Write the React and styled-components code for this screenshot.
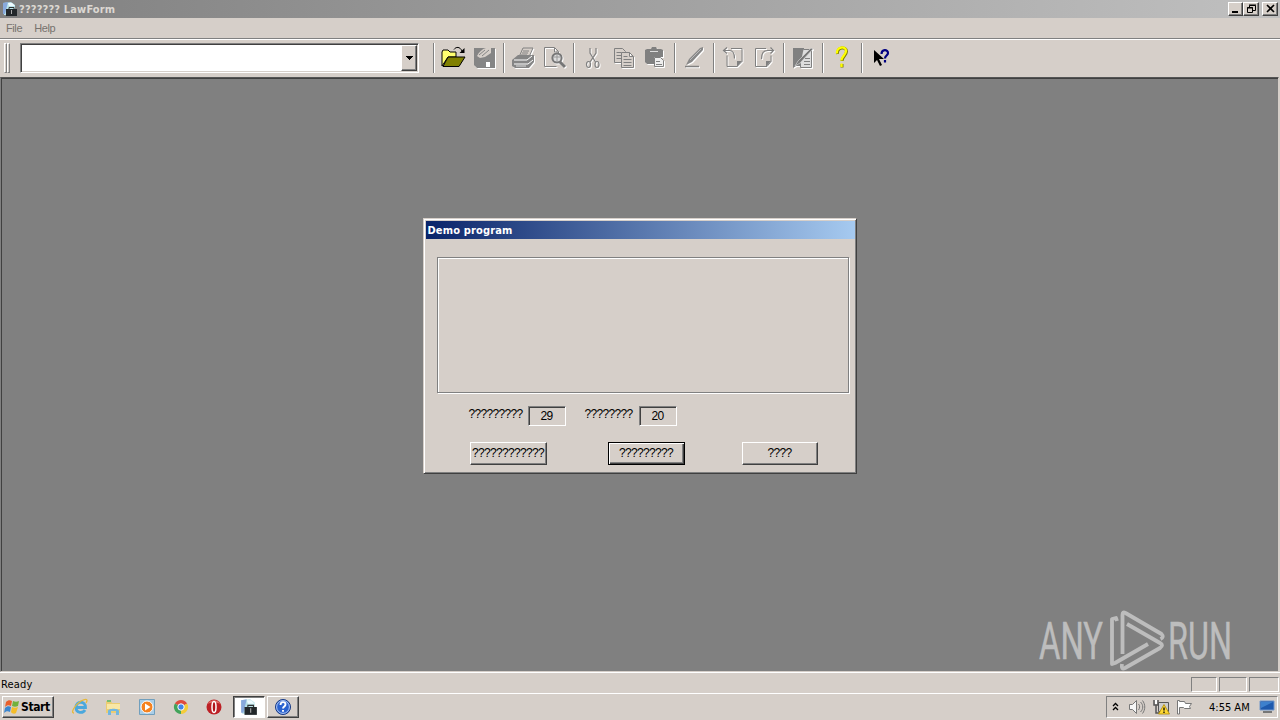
import React from "react";
import styled, { createGlobalStyle } from "styled-components";

const face = "#d6cfc9";

function App() {
  return (
    <Screen>
      <GlobalStyle />
      <TitleBar>
        <AppIcon size={16} />
        <Title>??????? LawForm</Title>
        <WindowButtons>
          <WindowButton $wide={15}>
            <svg width="11" height="10" viewBox="0 0 11 10">
              <path d="M2 8h6" stroke="#000" strokeWidth="2" />
            </svg>
          </WindowButton>
          <WindowButton $wide={16}>
            <svg width="11" height="10" viewBox="0 0 11 10" fill="none" stroke="#000">
              <path d="M3.500 3V1.500h6v5H7M3 1h7M1.500 3.500h5v5h-5zM1 4h6" />
            </svg>
          </WindowButton>
          <WindowButton $wide={16} $gap>
            <svg width="11" height="10" viewBox="0 0 11 10">
              <path d="M2 1l7 7M9 1L2 8" stroke="#000" strokeWidth="1.600" />
            </svg>
          </WindowButton>
        </WindowButtons>
      </TitleBar>
      <MenuBar>
        <MenuItem>File</MenuItem>
        <MenuItem>Help</MenuItem>
      </MenuBar>
      <Toolbar />
      <Workspace>
        <DemoDialog />
      </Workspace>
      <StatusBar>
        <Ready>Ready</Ready>
        <Pane $wide={26} />
        <Pane $wide={28} />
        <Pane $wide={30} />
      </StatusBar>
      <Taskbar />
      <Watermark />
    </Screen>
  );
}

export default App;

function Toolbar() {
  return (
    <Tools>
      <Grip />
      <Grip />
      <Combo>
        <ComboButton>
          <svg width="7" height="4" viewBox="0 0 7 4" shapeRendering="crispEdges">
            <path d="M0 0h7v1H0zM1 1h5v1H1zM2 2h3v1H2zM3 3h1v1H3z" />
          </svg>
        </ComboButton>
      </Combo>
      <Separator $first />
      <Tool>
        <Glyph>
          <path d="M1 20V6l1-2h5l2 2h6v5H7z" fill="#ffff70" stroke="#000" />
          <path d="M2 20.500L7 11h17l-6 9.500z" fill="#808000" stroke="#000" />
          <path d="M13 3.500c2-3 6-3 8 1.500" fill="none" stroke="#000" />
          <path d="M23.500 2v5h-5z" fill="#000" />
        </Glyph>
      </Tool>
      <Tool>
        <Glyph $disabled>
          <path d="M2 2h21v20H5l-3-3z" fill="#858585" />
          <path d="M5 10C7 6 10 3 14 2h5v5l-6 4-5 1z" fill={face} />
          <path d="M7 9l6-5M10 10l7-6" stroke="#858585" />
          <path d="M9 15h8v6h-3v-4h-2v4H9z" fill="#858585" />
          <path d="M14 16h4v5h-4z" fill="#fff" />
        </Glyph>
      </Tool>
      <Separator />
      <Tool>
        <Glyph $disabled>
          <path d="M8 11l4-9h10l-4 9z" fill={face} stroke="#808080" />
          <path d="M12 5h6M11 7h6M10 9h6" stroke="#808080" />
          <path d="M1 14l6-5h16v7l-5 6H4l-3-2z" fill="#858585" />
          <path d="M3 14h13l5-4M3 18h14l5-4" fill="none" stroke="#fff" />
          <path d="M5 20h10" stroke="#ddd" />
        </Glyph>
      </Tool>
      <Tool>
        <Glyph $disabled>
          <path d="M2.500 20.500v-19h10l4 4v3M2.500 20.500h12M12.500 2v4h4" fill="none" stroke="#808080" />
          <circle cx="15" cy="12" r="4.600" fill="#ddd" stroke="#777" strokeWidth="2" />
          <path d="M15 8v7M12 11h6" stroke="#999" />
          <path d="M18 16l5 5" stroke="#777" strokeWidth="3" />
        </Glyph>
      </Tool>
      <Separator />
      <Tool>
        <Glyph $disabled>
          <path d="M9 2v5l5.500 9M15 2v5l-6 9" fill="none" stroke="#808080" strokeWidth="1.200" />
          <ellipse cx="7.500" cy="18.500" rx="2" ry="3" fill="none" stroke="#808080" strokeWidth="1.200" />
          <ellipse cx="16" cy="18.500" rx="2" ry="3" fill="none" stroke="#808080" strokeWidth="1.200" />
        </Glyph>
      </Tool>
      <Tool>
        <Glyph $disabled>
          <path d="M2.500 2.500h8l3 3v11h-11z" fill={face} stroke="#808080" />
          <path d="M4.500 6.500h5M4.500 9.500h5M4.500 12.500h5" stroke="#808080" />
          <path d="M9.500 6.500h8l4 4v11h-12zM17.500 6.500v4h4" fill={face} stroke="#808080" />
          <path d="M11.500 10.500h4M11.500 13.500h8M11.500 16.500h8M11.500 19.500h8" stroke="#808080" />
        </Glyph>
      </Tool>
      <Tool>
        <Glyph $disabled>
          <path d="M2 4l2-1h4l1-2h4l1 2h4l2 1v7h-9v7H4l-2-2z" fill="#808080" />
          <path d="M7 5.500h8" stroke="#ddd" />
          <path d="M11.500 11.500h6l3 3v6h-9z" fill="#eee" stroke="#808080" />
          <path d="M13 15.500h4M13 18.500h6" stroke="#808080" />
        </Glyph>
      </Tool>
      <Separator />
      <Tool>
        <Glyph $disabled>
          <path d="M4 19l3-6L18 2l3-1v3L10 16z" fill="#888" />
          <path d="M8 14L19 3" stroke="#bbb" />
          <path d="M3 20.500h14" stroke="#808080" strokeWidth="1.500" />
        </Glyph>
      </Tool>
      <Separator />
      <Tool>
        <Glyph $disabled>
          <path d="M10 2.500h11v13l-5 5H6v-11" fill="none" stroke="#808080" />
          <path d="M21 15l-5 6v-6z" fill="#808080" />
          <path d="M2.500 4.500h6c4 0 5 3 5 8M6 1.500l-3.500 3 3.500 3" fill="none" stroke="#808080" strokeWidth="1.200" />
        </Glyph>
      </Tool>
      <Tool>
        <Glyph $disabled>
          <path d="M14 2.500H3.500v18H15l4-5v-6" fill="none" stroke="#808080" />
          <path d="M19 15l-5 6v-6z" fill="#808080" />
          <path d="M9.500 13c0-6 2-8.500 6-8.500h6M18.500 1.500l3 3-3 3" fill="none" stroke="#808080" strokeWidth="1.200" />
        </Glyph>
      </Tool>
      <Separator />
      <Tool>
        <Glyph $disabled>
          <path d="M2 2h11v18H5l-3 2z" fill="#808080" />
          <path d="M12.500 3.500h8v18h-11v-4" fill="#ddd" stroke="#808080" />
          <path d="M14 12.500h5M13 15.500h6M13 18.500h6" stroke="#808080" />
          <path d="M4 20L7 15 20 2l2 1L9 17z" fill="#777" stroke="#ddd" strokeWidth=".6" />
        </Glyph>
      </Tool>
      <Separator />
      <Tool>
        <Glyph>
          <path
            d="M7.500 8c-1-7 9-8 9-2.500 0 4-4.500 5-4.500 9.500M12 18v3.500"
            fill="none"
            stroke="#808000"
            strokeWidth="3"
          />
          <path d="M7 7.500c-1-7 9-8 9-2.500 0 4-4.500 5-4.500 9.500M11.500 17.500V21" fill="none" stroke="#ff0" strokeWidth="2.300" />
        </Glyph>
      </Tool>
      <Separator />
      <Tool>
        <Glyph>
          <path d="M5 4v13l3-3 3 6 2-1-3-6h5z" fill="#000" />
          <path
            d="M12.500 8c0-5 6.500-5 6.500-1 0 2.500-3 2.500-3 5.500M16 14v2.500"
            fill="none"
            stroke="#000080"
            strokeWidth="2.200"
          />
        </Glyph>
      </Tool>
    </Tools>
  );
}

function DemoDialog() {
  return (
    <Dialog>
      <DialogTitle>Demo program</DialogTitle>
      <GroupBox />
      <Counters>
        <CounterLabel $wide={59}>?????????</CounterLabel>
        <Counter>29</Counter>
        <CounterLabel $wide={54} $left={19}>
          ????????
        </CounterLabel>
        <Counter>20</Counter>
      </Counters>
      <Buttons>
        <Button $wide={77}>????????????</Button>
        <Button $wide={77} $left={61} $default>
          ?????????
        </Button>
        <Button $wide={76} $left={57}>
          ????
        </Button>
      </Buttons>
    </Dialog>
  );
}

function Taskbar() {
  return (
    <Tasks>
      <StartButton>
        <svg width="17" height="16" viewBox="0 0 17 16">
          <path d="M2 3c2-2 4-2 6-1L7 7C5 6 3 6 1 8z" fill="#e9602c" />
          <path d="M9 2c2 1 4 1 6 0l-1 5c-2 1-4 1-6 0z" fill="#73b13c" />
          <path d="M1 9c2-2 4-2 6-1l-1 5c-2-1-4-1-6 1z" fill="#3c86cf" />
          <path d="M8 8c2 1 4 1 6 0l-2 6c-1 1-4 1-5-1z" fill="#f5bd29" />
        </svg>
        Start
      </StartButton>
      <Launch>
        <svg width="18" height="18" viewBox="0 0 18 18" fill="none">
          <path d="M4.500 9.500h10c0-7-9.500-7-9.500 0 0 6 7 6 9 2.500" stroke="#4aa8dd" strokeWidth="2.800" />
          <path d="M3 15C-1 15 4 7 10 3c6-3.500 7-1 5 2" stroke="#e6b83a" strokeWidth="1.300" />
        </svg>
      </Launch>
      <Launch>
        <svg width="18" height="18" viewBox="0 0 18 18">
          <path d="M2 3h5l1 2h8v10H2z" fill="#ebcd72" />
          <path d="M3 2h4v2H3z" fill="#77bd73" />
          <path d="M3 6h13v5H3z" fill="#f8e7a5" />
          <path d="M4 17v-4c0-3 11-3 11 0v4h-3v-4H7v4z" fill="#72b7df" />
        </svg>
      </Launch>
      <Launch>
        <svg width="18" height="18" viewBox="0 0 18 18">
          <path d="M1.500 1.500h15v15h-15z" fill="#a9cee8" stroke="#719fbd" />
          <circle cx="9" cy="9" r="6" fill="#f58220" stroke="#fff" />
          <path d="M7 5.500l5.500 3.500L7 12.500z" fill="#fff" />
        </svg>
      </Launch>
      <Launch>
        <svg width="18" height="18" viewBox="0 0 18 18">
          <path d="M9 9L2.900 5.500A7 7 0 0 1 15.100 5.500z" fill="#df4b3d" />
          <path d="M9 9L15.100 5.500A7 7 0 0 1 9 16z" fill="#f4cc39" />
          <path d="M9 9v7A7 7 0 0 1 2.900 5.500z" fill="#42a35a" />
          <circle cx="9" cy="9" r="3.200" fill="#4285e8" stroke="#fff" />
        </svg>
      </Launch>
      <Launch>
        <svg width="18" height="18" viewBox="0 0 18 18">
          <circle cx="9" cy="9" r="7.500" fill="#bd2025" />
          <path d="M2.500 6C5 1 13 1 15.500 6c-4-2-9-2-13 0z" fill="#df6963" />
          <ellipse cx="9" cy="9" rx="2" ry="5.500" fill="#b1151a" stroke="#fff" strokeWidth="1.500" />
        </svg>
      </Launch>
      <TaskButton $active>
        <AppIcon size={18} />
      </TaskButton>
      <TaskButton>
        <svg width="18" height="18" viewBox="0 0 18 18">
          <circle cx="9" cy="9" r="7.500" fill="#2a62cf" stroke="#163985" />
          <circle cx="9" cy="9" r="6.400" fill="none" stroke="#d5e5ff" strokeWidth=".8" />
          <path
            d="M6.500 7c0-4 5-3.500 5-.5 0 2-2.500 2-2.500 4M9 12v1.800"
            fill="none"
            stroke="#fff"
            strokeWidth="1.900"
          />
        </svg>
      </TaskButton>
      <Tray>
        <TrayIcon $wide={17}>
          <svg width="7" height="11" viewBox="0 0 7 11" fill="none" stroke="#000" strokeWidth="1.300">
            <path d="M1 4l2.500-2.500L6 4M1 8l2.500-2.500L6 8" />
          </svg>
        </TrayIcon>
        <TrayIcon $wide={26}>
          <svg width="18" height="16" viewBox="0 0 18 16" fill="none" stroke="#777">
            <path d="M1.500 5.500h3l4-4v13l-4-4h-3z" fill="#f6f6f6" />
            <path d="M10.500 5c1.500 1.500 1.500 4 0 6M12.500 3c3 3 3 7 0 10M14.500 1.500c3 4 3 9 0 13" />
          </svg>
        </TrayIcon>
        <TrayIcon $wide={22}>
          <svg width="17" height="16" viewBox="0 0 17 16">
            <path d="M5.500 3.500h10v9h-10z" fill="#ccc" stroke="#555" />
            <path d="M1 1v5h4V1M3 6v8h5" fill="none" stroke="#555" strokeWidth="1.500" />
            <path d="M2 1v4h2V1" fill="#fff" />
            <path d="M11 5.500L16.500 15h-11z" fill="#ffd934" stroke="#ad8800" strokeWidth=".8" />
            <path d="M11 8.500v3M11 12.500V14" stroke="#000" strokeWidth="1.300" />
          </svg>
        </TrayIcon>
        <TrayIcon $wide={25}>
          <svg width="17" height="16" viewBox="0 0 17 16">
            <path
              d="M1.500 15V1.500h2v1h5l1 2h6l-2 3 1 2h-6l-1-1h-4V15z"
              fill="#fff"
              stroke="#777"
            />
          </svg>
        </TrayIcon>
        <Clock>4:55 AM</Clock>
        <svg width="16" height="14" viewBox="0 0 16 14">
          <path d="M1 1h14v9H1z" fill="#1e59ad" stroke="#7197ca" />
          <path d="M2 2h12L2 8z" fill="#3d80cd" />
          <path d="M4 12h9" stroke="#777" strokeWidth="2" />
        </svg>
      </Tray>
    </Tasks>
  );
}

function AppIcon({ size }) {
  return (
    <svg width={size} height={size} viewBox="0 0 16 16">
      <path d="M1 2l8-1 4 3v10H2z" fill="#b7e2e8" />
      <path d="M1 2l5-1-3 12H1z" fill="#88a9dc" />
      <path d="M6 2h4l3 3H7z" fill="#effbff" />
      <path d="M4 8h11v7H4z" fill="#22272a" />
      <path d="M7 8V6.500h5V8" fill="none" stroke="#333" />
      <path d="M9.500 9v4" stroke="#aaa" />
    </svg>
  );
}

function Watermark() {
  return (
    <Mark width="200" height="68" viewBox="0 0 200 68">
      <g fill="#bdbdbd" stroke="#bdbdbd" strokeWidth=".5" fontFamily="Roboto, sans-serif" fontSize="52">
        <text x="4" y="53" textLength="64" lengthAdjust="spacingAndGlyphs">
          ANY
        </text>
        <text x="133" y="53" textLength="64" lengthAdjust="spacingAndGlyphs">
          RUN
        </text>
      </g>
      <g fill="none" stroke="#bdbdbd" strokeWidth="3.800" strokeLinejoin="round">
        <path d="M82 15l-1-3-4 1v45l3-1 33-19" />
        <path d="M87.500 48V9q0-4 3-2l36 21q3 3-1 5" />
        <path d="M87 58q-1 6 3 4l35-20q4-3 0-5L92 18" />
      </g>
    </Mark>
  );
}

const GlobalStyle = createGlobalStyle`
  * {
    box-sizing: border-box;
  }
  body {
    margin: 0;
    overflow: hidden;
    font: 11px "DejaVu Sans Condensed", "DejaVu Sans", sans-serif;
    color: #000;
  }
  svg {
    flex-shrink: 0;
  }
`;

const Screen = styled.div`
  width: 1280px;
  height: 720px;
  display: flex;
  flex-direction: column;
  background: ${face};
  position: relative;
`;

const TitleBar = styled.div`
  height: 18px;
  display: flex;
  align-items: center;
  padding: 0 2px 0 2px;
  background: linear-gradient(90deg, #808080, #c0c0c0);
`;

const Title = styled.div`
  color: #dcd8d2;
  font: bold 11px "DejaVu Sans Condensed", sans-serif;
  white-space: nowrap;
  margin-left: 1px;
  letter-spacing: 0.15px;
`;

const WindowButtons = styled.div`
  margin-left: auto;
  display: flex;
`;

const WindowButton = styled.div`
  width: ${(props) => props.$wide}px;
  height: 14px;
  margin-left: ${(props) => (props.$gap ? 3 : 0)}px;
  display: flex;
  align-items: center;
  justify-content: center;
  background: ${face};
  border: 1px solid;
  border-color: #fff #404040 #404040 #fff;
  box-shadow: inset -1px -1px #808080;
`;

const MenuBar = styled.div`
  height: 21px;
  display: flex;
  padding: 3px 0 0 6px;
  gap: 12px;
  border-bottom: 1px solid #808080;
`;

const MenuItem = styled.div`
  font: 11px/14px "Liberation Sans", sans-serif;
  letter-spacing: -0.4px;
  color: #77726d;
`;

const Tools = styled.div`
  height: 38px;
  display: flex;
  padding: 3px 0 0 4px;
  border-top: 1px solid #fff;
`;

const Grip = styled.div`
  width: 3px;
  height: 30px;
  border: 1px solid;
  border-color: #fff #808080 #808080 #fff;
`;

const Combo = styled.div`
  width: 399px;
  height: 30px;
  margin-left: 10px;
  display: flex;
  justify-content: flex-end;
  background: #fff;
  border: 1px solid;
  border-color: #808080 #fff #fff #808080;
  box-shadow: inset 1px 1px #404040, inset -1px -1px ${face};
`;

const ComboButton = styled.div`
  width: 16px;
  height: 26px;
  margin: 1px 1px 0 0;
  display: flex;
  align-items: center;
  justify-content: center;
  background: ${face};
  border: 1px solid;
  border-color: #fff #404040 #404040 #fff;
  box-shadow: inset -1px -1px #808080;
`;

const Separator = styled.div`
  width: 2px;
  height: 30px;
  margin: 0 3px 0 ${(props) => (props.$first ? 14 : 3)}px;
  border-left: 1px solid #808080;
  border-right: 1px solid #fff;
`;

const Tool = styled.div`
  width: 31px;
  height: 30px;
  display: flex;
  align-items: center;
  justify-content: center;
`;

const Glyph = styled.svg.attrs({ width: 25, height: 24, viewBox: "0 0 25 24" })`
  filter: ${(props) => (props.$disabled ? "drop-shadow(1px 1px 0 #fff)" : "none")};
`;

const Workspace = styled.div`
  height: 595px;
  margin-right: 1px;
  background: #808080;
  border: 1px solid;
  border-color: #555 ${face} ${face} #808080;
  box-shadow: inset 1px 1px #404040;
  display: flex;
  justify-content: center;
  align-items: flex-start;
  padding-top: 140px;
`;

const Dialog = styled.div`
  width: 434px;
  height: 256px;
  padding: 1px;
  background: ${face};
  border: 1px solid;
  border-color: ${face} #404040 #404040 ${face};
  box-shadow: inset 1px 1px #fff, inset -1px -1px #808080;
`;

const DialogTitle = styled.div`
  height: 18px;
  margin: 1px 0 0 1px;
  padding-left: 2px;
  background: linear-gradient(90deg, #0a246a, #a6caf0);
  color: #fff;
  font: bold 11px/19px "DejaVu Sans Condensed", sans-serif;
  letter-spacing: 0.15px;
`;

const GroupBox = styled.div`
  width: 412px;
  height: 136px;
  margin: 18px 0 0 12px;
  border: 1px solid #808080;
  box-shadow: inset 1px 1px #fff, 1px 1px #fff;
`;

const Counters = styled.div`
  display: flex;
  align-items: flex-start;
  margin: 13px 0 0 44px;
`;

const CounterLabel = styled.div`
  width: ${(props) => props.$wide}px;
  margin-left: ${(props) => props.$left || 0}px;
  font: 12px/16px "Liberation Sans", sans-serif;
  letter-spacing: -0.67px;
`;

const Counter = styled.div`
  width: 38px;
  height: 20px;
  border: 1px solid;
  border-color: #808080 #fff #fff #808080;
  box-shadow: inset 1px 1px #404040;
  text-align: center;
  font: 12px/19px "Liberation Sans", sans-serif;
  letter-spacing: -0.67px;
`;

const Buttons = styled.div`
  display: flex;
  margin: 16px 0 0 45px;
`;

const Button = styled.div`
  width: ${(props) => props.$wide}px;
  height: 23px;
  margin-left: ${(props) => props.$left || 0}px;
  overflow: hidden;
  white-space: nowrap;
  text-align: center;
  font: 12px/20px "Liberation Sans", sans-serif;
  letter-spacing: -0.67px;
  border: 1px solid;
  border-color: ${(props) => (props.$default ? "#000" : "#fff #404040 #404040 #fff")};
  box-shadow: ${(props) =>
    props.$default
      ? "inset 1px 1px #fff, inset -1px -1px #404040, inset -2px -2px #808080"
      : "inset -1px -1px #808080"};
`;

const StatusBar = styled.div`
  height: 21px;
  display: flex;
  gap: 2px;
  padding: 4px 1px 0 1px;
  border-top: 1px solid #fff;
`;

const Ready = styled.div`
  flex: 1;
  line-height: 15px;
  letter-spacing: 0.15px;
`;

const Pane = styled.div`
  width: ${(props) => props.$wide}px;
  height: 15px;
  border: 1px solid;
  border-color: #808080 #fff #fff #808080;
`;

const Tasks = styled.div`
  height: 27px;
  display: flex;
  padding: 2px;
  border-top: 1px solid #fff;
`;

const StartButton = styled.div`
  width: 52px;
  height: 22px;
  margin-right: 9px;
  display: flex;
  align-items: center;
  padding-left: 1px;
  background: ${face};
  border: 1px solid;
  border-color: #fff #404040 #404040 #fff;
  box-shadow: inset -1px -1px #808080;
  font: bold 12px "DejaVu Sans Condensed", sans-serif;
  letter-spacing: -0.4px;
`;

const Launch = styled.div`
  width: 33.6px;
  height: 22px;
  display: flex;
  align-items: center;
  justify-content: center;
`;

const TaskButton = styled.div`
  width: 32px;
  height: 22px;
  margin-left: 2px;
  display: flex;
  align-items: center;
  justify-content: center;
  background: ${(props) => (props.$active ? "#fff" : face)};
  border: 1px solid;
  border-color: ${(props) => (props.$active ? "#404040 #fff #fff #404040" : "#fff #404040 #404040 #fff")};
  box-shadow: ${(props) => (props.$active ? "inset 1px 1px #808080" : "inset -1px -1px #808080")};
`;

const Tray = styled.div`
  width: 172px;
  height: 22px;
  margin-left: auto;
  display: flex;
  align-items: center;
  border: 1px solid;
  border-color: #808080 #fff #fff #808080;
`;

const TrayIcon = styled.div`
  width: ${(props) => props.$wide}px;
  display: flex;
  justify-content: center;
`;

const Clock = styled.div`
  width: 57px;
  padding-left: 12px;
  margin-right: 5px;
  white-space: nowrap;
`;

const Mark = styled.svg`
  position: absolute;
  left: 1035px;
  top: 606px;
  overflow: visible;
`;
